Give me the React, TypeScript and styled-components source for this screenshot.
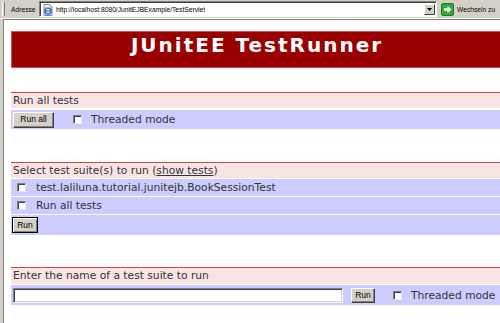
import React from 'react';
import styled, { createGlobalStyle } from 'styled-components';

const GlobalStyle = createGlobalStyle`
  html, body {
    margin: 0;
    padding: 0;
  }
  body {
    width: 500px;
    height: 323px;
    overflow: hidden;
    background: #d4d0c8;
    font-family: "DejaVu Sans", Verdana, sans-serif;
  }
`;

const Window = styled.div`
  display: flex;
  flex-direction: column;
  height: 323px;
`;

const Toolbar = styled.div`
  display: flex;
  align-items: center;
  height: 19px;
  box-sizing: border-box;
  border-bottom: 1px solid #fff;
  font-family: "Liberation Sans", Arial, sans-serif;
  font-size: 6.7px;
  color: #000;
`;

const Grip = styled.span`
  width: 1px;
  height: 14px;
  margin-left: 2px;
  border-left: 1px solid #fff;
  border-right: 1px solid #808080;
`;

const Label = styled.span`
  margin-left: 6px;
  width: 28px;
`;

const AddressBox = styled.div`
  display: flex;
  align-items: center;
  width: 398px;
  height: 16px;
  box-sizing: border-box;
  background: #fff;
  border: 1px solid;
  border-color: #808080 #fff #fff #808080;
  box-shadow: inset 1px 1px #404040;
  padding: 1px 1px 0 2px;
`;

const Url = styled.span`
  flex: 1;
  margin-left: 2px;
  white-space: nowrap;
`;

const DropButton = styled.span`
  display: flex;
  align-items: center;
  justify-content: center;
  width: 11px;
  height: 11px;
  box-sizing: border-box;
  background: #d4d0c8;
  border: 1px solid;
  border-color: #fff #404040 #404040 #fff;
`;

const GoButton = styled.div`
  display: flex;
  align-items: center;
  margin-left: 4px;
  gap: 3px;
  white-space: nowrap;
`;

const Frame = styled.div`
  flex: 1;
  margin-left: 3px;
  border-left: 1px solid #808080;
  border-top: 1px solid #808080;
  background: #fff;
  padding: 11px 0 0 7px;
  overflow: hidden;
`;

const Content = styled.div`
  width: 492px;
  color: #333;
  font-size: 10.7px;
`;

const Header = styled.h1`
  margin: 0;
  height: 37px;
  box-sizing: border-box;
  padding-top: 1px;
  border: 1px solid #c05858;
  background: #990000;
  color: #fff;
  font-size: 20px;
  line-height: 24px;
  font-weight: bold;
  letter-spacing: 2px;
  text-align: center;
`;

const Section = styled.section<{ $top: number; $gap: number }>`
  display: flex;
  flex-direction: column;
  gap: ${p => p.$gap}px;
  margin-top: ${p => p.$top}px;
`;

const SectionTitle = styled.div<{ $height: number }>`
  height: ${p => p.$height}px;
  box-sizing: border-box;
  border-top: 1px solid #c04848;
  background: #f8e4e4;
  padding-left: 2px;
  line-height: 15px;

  a {
    color: inherit;
    text-decoration: underline;
  }
`;

const Row = styled.div<{ $height: number; $pad: number }>`
  display: flex;
  align-items: center;
  height: ${p => p.$height}px;
  padding-left: ${p => p.$pad}px;
  background: #ccccff;
`;

const Button = styled.button<{ $width: number; $height: number; $isDefault?: boolean }>`
  width: ${p => p.$width}px;
  height: ${p => p.$height}px;
  padding: 0;
  box-sizing: border-box;
  background: #d4d0c8;
  border: 1px solid;
  border-color: ${p => (p.$isDefault ? '#000' : '#fff #404040 #404040 #fff')};
  box-shadow: ${p =>
    p.$isDefault ? 'inset 1px 1px #fff, inset -1px -1px #808080' : 'inset -1px -1px #808080'};
  font-family: "Liberation Sans", Arial, sans-serif;
  font-size: 8.5px;
  color: #000;
  line-height: 1;
`;

const Checkbox = styled.span<{ $left: number }>`
  display: inline-block;
  flex: none;
  width: 9px;
  height: 9px;
  box-sizing: border-box;
  margin-left: ${p => p.$left}px;
  background: #fff;
  border: 1px solid;
  border-color: #808080 #e8e8e8 #e8e8e8 #808080;
  box-shadow: inset 1px 1px #404040;
`;

const RowText = styled.span<{ $left: number }>`
  margin-left: ${p => p.$left}px;
  white-space: nowrap;
`;

const TextInput = styled.div`
  width: 330px;
  height: 15px;
  box-sizing: border-box;
  margin-right: 8px;
  background: #fff;
  border: 1px solid;
  border-color: #808080 #fff #fff #808080;
  box-shadow: inset 1px 1px #404040, inset -1px -1px #d4d0c8;
`;

const PageIcon = () => (
  <svg width="12" height="12" viewBox="0 0 12 12">
    <path d="M2 0.5h5.5l2.5 2.5v8.5h-8z" fill="#eef3fb" stroke="#6f86b0" strokeWidth="1" />
    <circle cx="6" cy="7" r="3" fill="none" stroke="#2d6fd6" strokeWidth="1.6" />
    <path d="M3.5 7h5" stroke="#2d6fd6" strokeWidth="1.2" />
    <path d="M1 5.5c2-2 8-3 10-2" fill="none" stroke="#f0b030" strokeWidth="0.9" />
  </svg>
);

const GoIcon = () => (
  <svg width="13" height="13" viewBox="0 0 13 13">
    <rect x="0.5" y="0.5" width="12" height="12" rx="1.5" fill="#34a834" stroke="#1e7a1e" />
    <path d="M3 5.2h3.5V2.8l4 3.7-4 3.7V7.8H3z" fill="#fff" />
  </svg>
);

const App: React.FC = () => (
  <>
    <GlobalStyle />
    <Window>
      <Toolbar>
        <Grip />
        <Label>Adresse</Label>
        <AddressBox>
          <PageIcon />
          <Url>http://localhost:8080/JunitEJBExample/TestServlet</Url>
          <DropButton>
            <svg width="5" height="3" viewBox="0 0 5 3">
              <path d="M0 0h5L2.5 3z" fill="#000" />
            </svg>
          </DropButton>
        </AddressBox>
        <GoButton>
          <GoIcon />
          <span>Wechseln zu</span>
        </GoButton>
      </Toolbar>
      <Frame>
        <Content>
          <Header>JUnitEE TestRunner</Header>

          <Section $top={24} $gap={2}>
            <SectionTitle $height={16}>Run all tests</SectionTitle>
            <Row $height={19} $pad={2}>
              <Button $width={41} $height={16}>Run all</Button>
              <Checkbox $left={19} />
              <RowText $left={9}>Threaded mode</RowText>
            </Row>
          </Section>

          <Section $top={33} $gap={1}>
            <SectionTitle $height={16}>
              Select test suite(s) to run (<a>show tests</a>)
            </SectionTitle>
            <Row $height={17} $pad={6}>
              <Checkbox $left={0} />
              <RowText $left={10}>test.laliluna.tutorial.junitejb.BookSessionTest</RowText>
            </Row>
            <Row $height={17} $pad={6}>
              <Checkbox $left={0} />
              <RowText $left={10}>Run all tests</RowText>
            </Row>
            <Row $height={20} $pad={1}>
              <Button $width={26} $height={16} $isDefault>Run</Button>
            </Row>
          </Section>

          <Section $top={32} $gap={1}>
            <SectionTitle $height={17}>Enter the name of a test suite to run</SectionTitle>
            <Row $height={20} $pad={2}>
              <TextInput />
              <Button $width={24} $height={15}>Run</Button>
              <Checkbox $left={18} />
              <RowText $left={9}>Threaded mode</RowText>
            </Row>
          </Section>
        </Content>
      </Frame>
    </Window>
  </>
);

export default App;
